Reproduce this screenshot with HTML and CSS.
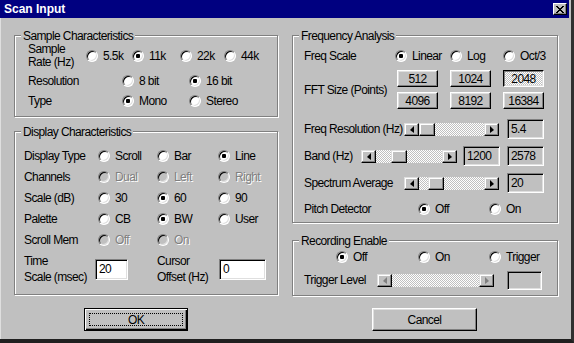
FILE: index.html
```html
<!DOCTYPE html>
<html>
<head>
<meta charset="utf-8">
<title>Scan Input</title>
<link rel="stylesheet" href="styles.css">
</head>
<body>
<div class="window">
  <div class="titlebar">
    <span class="title">Scan Input</span>
    <span class="close"><svg width="8" height="7" viewBox="0 0 8 7" shape-rendering="crispEdges"><path d="M0 0h2v1h1v1h2v-1h1v-1h2v1h-1v1h-1v1h-1v1h1v1h1v1h1v1h-2v-1h-1v-1h-2v1h-1v1h-2v-1h1v-1h1v-1h1v-1h-1v-1h-1v-1h-1z"/></svg></span>
  </div>
  <div class="content">
    <div class="col">
      <div class="group g-sample">
        <span class="legend">Sample Characteristics</span>
        <div class="row r-rate">
          <div class="lbl two">Sample<br>Rate (Hz)</div>
          <div class="opt"><span class="radio"></span>5.5k</div>
          <div class="opt"><span class="radio on"></span>11k</div>
          <div class="opt"><span class="radio"></span>22k</div>
          <div class="opt"><span class="radio"></span>44k</div>
        </div>
        <div class="row r-res">
          <div class="lbl">Resolution</div>
          <div class="opt"><span class="radio"></span>8 bit</div>
          <div class="opt"><span class="radio on"></span>16 bit</div>
        </div>
        <div class="row r-res">
          <div class="lbl">Type</div>
          <div class="opt"><span class="radio on"></span>Mono</div>
          <div class="opt"><span class="radio"></span>Stereo</div>
        </div>
      </div>

      <div class="group g-display">
        <span class="legend">Display Characteristics</span>
        <div class="row r-disp">
          <div class="lbl">Display Type</div>
          <div class="opt"><span class="radio"></span>Scroll</div>
          <div class="opt"><span class="radio"></span>Bar</div>
          <div class="opt"><span class="radio on"></span>Line</div>
        </div>
        <div class="row r-disp">
          <div class="lbl">Channels</div>
          <div class="opt dis"><span class="radio"></span>Dual</div>
          <div class="opt dis"><span class="radio"></span>Left</div>
          <div class="opt dis"><span class="radio"></span>Right</div>
        </div>
        <div class="row r-disp">
          <div class="lbl">Scale (dB)</div>
          <div class="opt"><span class="radio"></span>30</div>
          <div class="opt"><span class="radio on"></span>60</div>
          <div class="opt"><span class="radio"></span>90</div>
        </div>
        <div class="row r-disp">
          <div class="lbl">Palette</div>
          <div class="opt"><span class="radio"></span>CB</div>
          <div class="opt"><span class="radio on"></span>BW</div>
          <div class="opt"><span class="radio"></span>User</div>
        </div>
        <div class="row r-disp">
          <div class="lbl">Scroll Mem</div>
          <div class="opt dis"><span class="radio"></span>Off</div>
          <div class="opt dis"><span class="radio"></span>On</div>
        </div>
        <div class="row r-time">
          <div class="lbl tall w-time">Time<br>Scale (msec)</div>
          <div class="tb white w-33">20</div>
          <div class="lbl tall w-cursor">Cursor<br>Offset (Hz)</div>
          <div class="tb white w-47">0</div>
        </div>
      </div>

      <div class="btn default ok">OK</div>
    </div>

    <div class="col">
      <div class="group g-freq">
        <span class="legend">Frequency Analysis</span>
        <div class="row r-scale">
          <div class="lbl">Freq Scale</div>
          <div class="opt"><span class="radio on"></span>Linear</div>
          <div class="opt"><span class="radio"></span>Log</div>
          <div class="opt"><span class="radio"></span>Oct/3</div>
        </div>
        <div class="row r-fft">
          <div class="lbl w-fft">FFT Size (Points)</div>
          <div class="fft-grid">
            <div class="btn small">512</div>
            <div class="btn small">1024</div>
            <div class="btn small pressed">2048</div>
            <div class="btn small">4096</div>
            <div class="btn small">8192</div>
            <div class="btn small">16384</div>
          </div>
        </div>
        <div class="row r-ctl r-res2">
          <div class="lbl">Freq Resolution (Hz)</div>
          <div class="ctls">
            <div class="sb w-95">
              <span class="arrow left"></span>
              <span class="track"><span class="thumb" style="margin-left:0px"></span></span>
              <span class="arrow right"></span>
            </div>
            <div class="tb w-37">5.4</div>
          </div>
        </div>
        <div class="row r-ctl">
          <div class="lbl">Band (Hz)</div>
          <div class="ctls">
            <div class="sb w-96">
              <span class="arrow left"></span>
              <span class="track"><span class="thumb" style="margin-left:15px"></span></span>
              <span class="arrow right"></span>
            </div>
            <div class="tb w-37 band1">1200</div>
            <div class="tb w-37">2578</div>
          </div>
        </div>
        <div class="row r-ctl">
          <div class="lbl">Spectrum Average</div>
          <div class="ctls">
            <div class="sb w-95">
              <span class="arrow left"></span>
              <span class="track"><span class="thumb" style="margin-left:9px"></span></span>
              <span class="arrow right"></span>
            </div>
            <div class="tb w-37">20</div>
          </div>
        </div>
        <div class="row r-pitch">
          <div class="lbl">Pitch Detector</div>
          <div class="opt"><span class="radio on"></span>Off</div>
          <div class="opt"><span class="radio"></span>On</div>
        </div>
      </div>

      <div class="group g-rec">
        <span class="legend">Recording Enable</span>
        <div class="row r-rec">
          <div class="opt"><span class="radio on"></span>Off</div>
          <div class="opt"><span class="radio"></span>On</div>
          <div class="opt"><span class="radio"></span>Trigger</div>
        </div>
        <div class="row r-ctl r-trig">
          <div class="lbl">Trigger Level</div>
          <div class="ctls">
            <div class="sb w-117 disabled">
              <span class="arrow left"></span>
              <span class="track"></span>
              <span class="arrow right"></span>
            </div>
            <div class="tb w-35 trig"></div>
          </div>
        </div>
      </div>

      <div class="btn cancel">Cancel</div>
    </div>
  </div>
</div>
</body>
</html>
```

FILE: styles.css
```css
* { box-sizing: border-box; margin: 0; padding: 0; }
html, body { background: #c0c0c0; }
body {
  margin: 0;
  font-family: "Liberation Sans", Arial, sans-serif;
  font-size: 12px;
  letter-spacing: -0.6px;
  color: #000;
}

.window {
  width: 574px;
  height: 343px;
  background: #c0c0c0;
  border-right: 3px solid #303030;
  border-bottom: 4px solid #202020;
  box-shadow: inset 1px 0 0 #dfdfdf;
  padding-right: 2px;
  display: flex;
  flex-direction: column;
}

.titlebar {
  height: 18px;
  background: #000080;
  display: flex;
  align-items: center;
  justify-content: space-between;
  padding: 0 2px 0 4px;
}
.title { color: #fff; font-weight: bold; letter-spacing: 0; font-size: 12px; }
.close {
  width: 14px;
  height: 12px;
  background: #c0c0c0;
  border: 1px solid;
  border-color: #fff #000 #000 #fff;
  box-shadow: inset -1px -1px 0 #808080;
  display: flex;
  align-items: center;
  justify-content: center;
}
.close svg { display: block; }

.content {
  display: grid;
  grid-template-columns: 264px 266px;
  column-gap: 14px;
  padding: 17px 0 0 14px;
}
.col { display: flex; flex-direction: column; }

.group {
  position: relative;
  border: 1px solid #808080;
  box-shadow: 1px 1px 0 #fff, inset 1px 1px 0 #fff;
}
.legend {
  position: absolute;
  top: -7px;
  left: 6px;
  padding: 0 2px;
  line-height: 14px;
  background: #c0c0c0;
  white-space: nowrap;
}

.row { display: grid; align-items: center; }
.lbl { white-space: nowrap; }
.lbl.two { line-height: 13px; }
.lbl.tall { line-height: 16px; }

.opt { display: flex; align-items: center; white-space: nowrap; }
.opt.dis { color: #808080; text-shadow: 1px 1px 0 #fff; }

.radio {
  position: relative;
  flex: none;
  width: 12px;
  height: 12px;
  margin-right: 5px;
  border-radius: 50%;
  background: #fff;
  border: 1px solid;
  border-color: #808080 #fff #fff #808080;
  box-shadow: inset 1px 1px 0 #000, inset -1px -1px 0 #dfdfdf;
}
.opt.dis .radio { background: #c0c0c0; }
.radio.on::after {
  content: "";
  position: absolute;
  left: 3px;
  top: 3px;
  width: 4px;
  height: 4px;
  border-radius: 1px;
  background: #000;
}

/* sample group */
.g-sample { height: 82px; padding: 7px 0 0 13px; }
.r-rate { grid-template-columns: 58px 46px 48px 44px auto; height: 26px; }
.r-res { grid-template-columns: 94px 67px auto; height: 20px; }
.r-rate + .r-res { margin-top: 2px; }

/* display group */
.g-display { margin-top: 14px; height: 164px; padding: 13px 0 0 9px; }
.r-disp { grid-template-columns: 74px 59px 61px auto; height: 21px; }
.r-time { display: flex; align-items: center; margin-top: 3px; height: 32px; }
.w-time { width: 71px; }
.w-cursor { width: 62px; margin-left: 29px; }

.tb {
  height: 20px;
  border: 1px solid;
  border-color: #808080 #fff #fff #808080;
  box-shadow: inset 1px 1px 0 #000, inset -1px -1px 0 #dfdfdf;
  background: #c0c0c0;
  padding: 2px 0 0 3px;
  line-height: 15px;
  white-space: nowrap;
  overflow: hidden;
}
.tb.white { background: #fff; height: 21px; }
.w-33 { width: 33px; }
.w-47 { width: 47px; }
.w-37 { width: 37px; }
.w-35 { width: 35px; }

.btn {
  display: flex;
  align-items: center;
  justify-content: center;
  background: #c0c0c0;
  border: 1px solid;
  border-color: #fff #000 #000 #fff;
  box-shadow: inset -1px -1px 0 #808080, inset 1px 1px 0 #dfdfdf;
  white-space: nowrap;
}
.btn.default {
  position: relative;
  border-color: #000;
  box-shadow: inset 1px 1px 0 #fff, inset -1px -1px 0 #000, inset -2px -2px 0 #808080;
}
.btn.default::after {
  content: "";
  position: absolute;
  left: 4px;
  top: 4px;
  right: 4px;
  bottom: 4px;
  border: 1px dotted #000;
}
.ok { margin-top: 13px; margin-left: 70px; width: 104px; height: 23px; }
.cancel { margin-top: 12px; margin-left: 80px; width: 105px; height: 23px; }

/* frequency group */
.g-freq { height: 188px; padding: 10px 13px 0 11px; }
.r-scale { grid-template-columns: 91px 55px 53px auto; height: 20px; }
.r-fft { display: flex; align-items: center; margin-top: 4px; }
.w-fft { width: 93px; }
.fft-grid {
  display: grid;
  grid-template-columns: repeat(3, 41px);
  grid-auto-rows: 17px;
  column-gap: 12px;
  row-gap: 5px;
}
.btn.small { padding-top: 1px; }
.btn.pressed {
  border-color: #000 #fff #fff #000;
  box-shadow: inset 1px 1px 0 #808080, inset -1px -1px 0 #dfdfdf;
  background: repeating-conic-gradient(#fff 0 25%, #c0c0c0 0 50%) 0 0 / 2px 2px;
}

.r-ctl { display: flex; align-items: center; height: 20px; margin-top: 7px; }
.r-res2 { margin-top: 10px; }
.ctls { margin-left: auto; display: flex; align-items: center; }
.ctls .tb { margin-left: 8px; }
.ctls .band1 { margin-left: 6px; }
.ctls .band1 + .tb { margin-left: 7px; }

.sb { display: flex; height: 13px; }
.w-95 { width: 95px; }
.w-96 { width: 96px; }
.w-117 { width: 117px; }
.track {
  flex: 1;
  display: flex;
  background: repeating-conic-gradient(#fff 0 25%, #c0c0c0 0 50%) 0 0 / 2px 2px;
}
.thumb, .arrow {
  flex: none;
  height: 13px;
  background: #c0c0c0;
  border: 1px solid;
  border-color: #dfdfdf #000 #000 #dfdfdf;
  box-shadow: inset -1px -1px 0 #808080, inset 1px 1px 0 #fff;
}
.thumb { width: 16px; }
.arrow {
  width: 15px;
  display: flex;
  align-items: center;
  justify-content: center;
}
.arrow::before {
  content: "";
  width: 0;
  height: 0;
  border-top: 4px solid transparent;
  border-bottom: 3px solid transparent;
}
.arrow.left::before { border-right: 4px solid #000; }
.arrow.right::before { border-left: 4px solid #000; }
.sb.disabled .arrow.left::before { border-right-color: #808080; }
.sb.disabled .arrow.right::before { border-left-color: #808080; }

.r-pitch { grid-template-columns: 114px 71px auto; height: 20px; margin-top: 6px; }

/* recording group */
.g-rec { margin-top: 17px; height: 56px; padding: 6px 13px 0 11px; }
.r-rec { grid-template-columns: 82px 71px auto; height: 20px; padding-left: 32px; }
.r-trig { margin-top: 3px; }
.ctls .trig { margin-left: 13px; margin-right: 2px; height: 19px; }
```
